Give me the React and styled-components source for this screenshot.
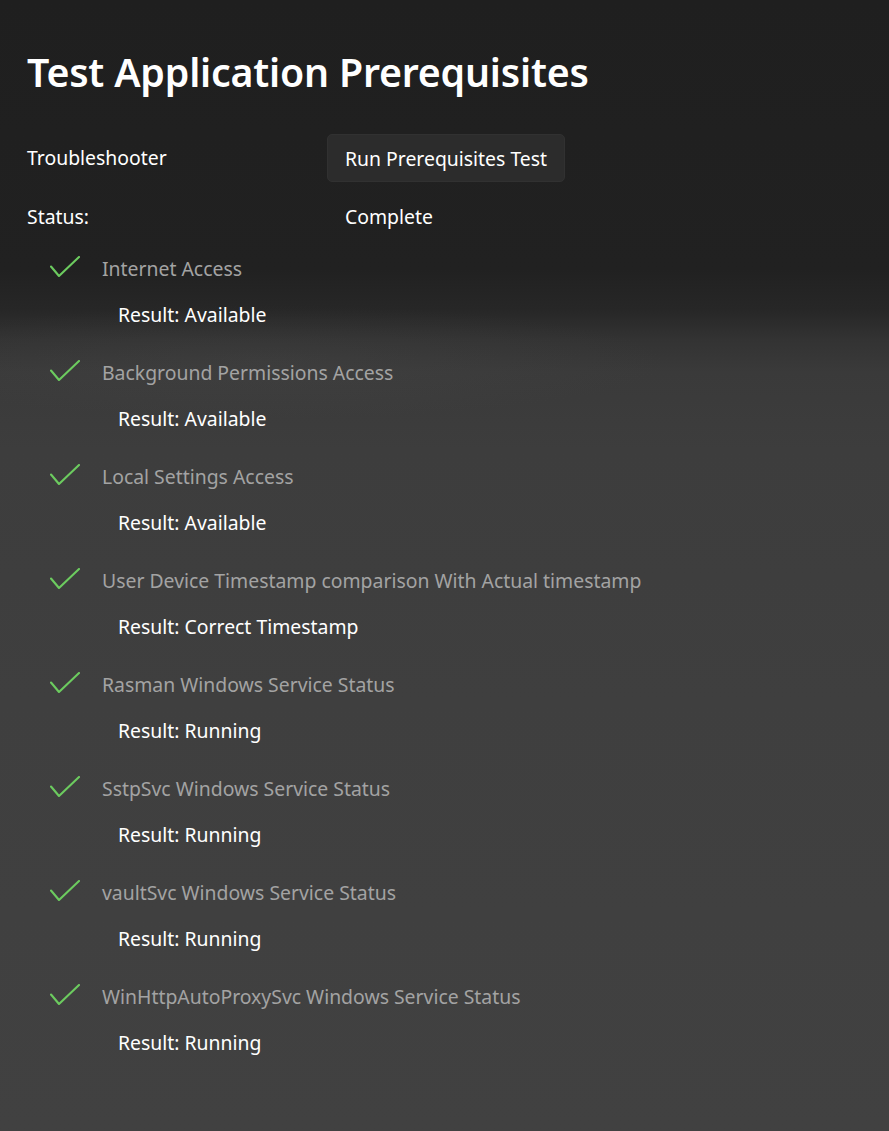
import React from "react";
import styled, { createGlobalStyle } from "styled-components";

const Global = createGlobalStyle`
  html, body { margin: 0; padding: 0; }
  body {
    width: 889px;
    min-height: 1131px;
    font-family: "Noto Sans", "Open Sans", sans-serif;
    background: #3f3f3f;
  }
`;

const Page = styled.div`
  box-sizing: border-box;
  width: 889px;
  height: 1131px;
  padding: 46px 0 0 27px;
  color: #ffffff;
  background:
    radial-gradient(ellipse 45% 5% at 30% 32%, rgba(78,78,78,0.22), rgba(78,78,78,0) 100%),
    linear-gradient(180deg, #1f1f1f 0px, #212121 270px, #272727 310px, #333333 340px, #3a3a3a 372px, #3d3d3d 450px, #3f3f3f 700px, #414141 1131px);
  overflow: hidden;
`;

const Title = styled.h1`
  margin: 0 0 36px;
  font-size: 39.3px;
  line-height: 52px;
  font-weight: 600;
  letter-spacing: -0.2px;
`;

const FieldGrid = styled.div`
  display: grid;
  grid-template-columns: 300px auto;
  row-gap: 11px;
  align-items: center;
  justify-items: start;
`;

const Label = styled.div`
  font-size: 19.4px;
  line-height: 48px;
`;

const Value = styled.div`
  font-size: 19.4px;
  line-height: 48px;
  padding-left: 18px;
`;

const Button = styled.button`
  height: 48px;
  padding: 0 17px;
  border: 1px solid #313131;
  border-radius: 5px;
  background: #2c2c2c;
  color: #ffffff;
  font-family: inherit;
  font-size: 19.4px;
`;

const List = styled.div`
  display: flex;
  flex-direction: column;
  margin-top: 12px;
  padding-left: 23px;
`;

const Item = styled.div`
  display: grid;
  grid-template-columns: 30px auto;
  column-gap: 22px;
  row-gap: 14px;
  height: 104px;
  align-content: start;
`;

const Check = styled.svg`
  width: 30px;
  height: 22px;
  align-self: center;
  margin-top: -4px;
`;

const ItemLabel = styled.div`
  font-size: 19.4px;
  line-height: 32px;
  color: #a3a3a3;
`;

const Result = styled.div`
  grid-column: 2;
  padding-left: 16px;
  font-size: 19.4px;
  line-height: 32px;
  color: #ffffff;
`;

const items = [
  ["Internet Access", "Available"],
  ["Background Permissions Access", "Available"],
  ["Local Settings Access", "Available"],
  ["User Device Timestamp comparison With Actual timestamp", "Correct Timestamp"],
  ["Rasman Windows Service Status", "Running"],
  ["SstpSvc Windows Service Status", "Running"],
  ["vaultSvc Windows Service Status", "Running"],
  ["WinHttpAutoProxySvc Windows Service Status", "Running"],
];

const CheckIcon = () => (
  <Check viewBox="0 0 30 22">
    <polyline points="1,10.5 9,20 29,1" fill="none" stroke="#6ccb5f" strokeWidth="2.1" strokeLinecap="round" strokeLinejoin="round" />
  </Check>
);

export default function App() {
  return (
    <>
      <Global />
      <Page>
        <Title>Test Application Prerequisites</Title>
        <FieldGrid>
          <Label>Troubleshooter</Label>
          <Button>Run Prerequisites Test</Button>
          <Label>Status:</Label>
          <Value>Complete</Value>
        </FieldGrid>
        <List>
          {items.map(([name, result]) => (
            <Item key={name}>
              <CheckIcon />
              <ItemLabel>{name}</ItemLabel>
              <Result>Result: {result}</Result>
            </Item>
          ))}
        </List>
      </Page>
    </>
  );
}
